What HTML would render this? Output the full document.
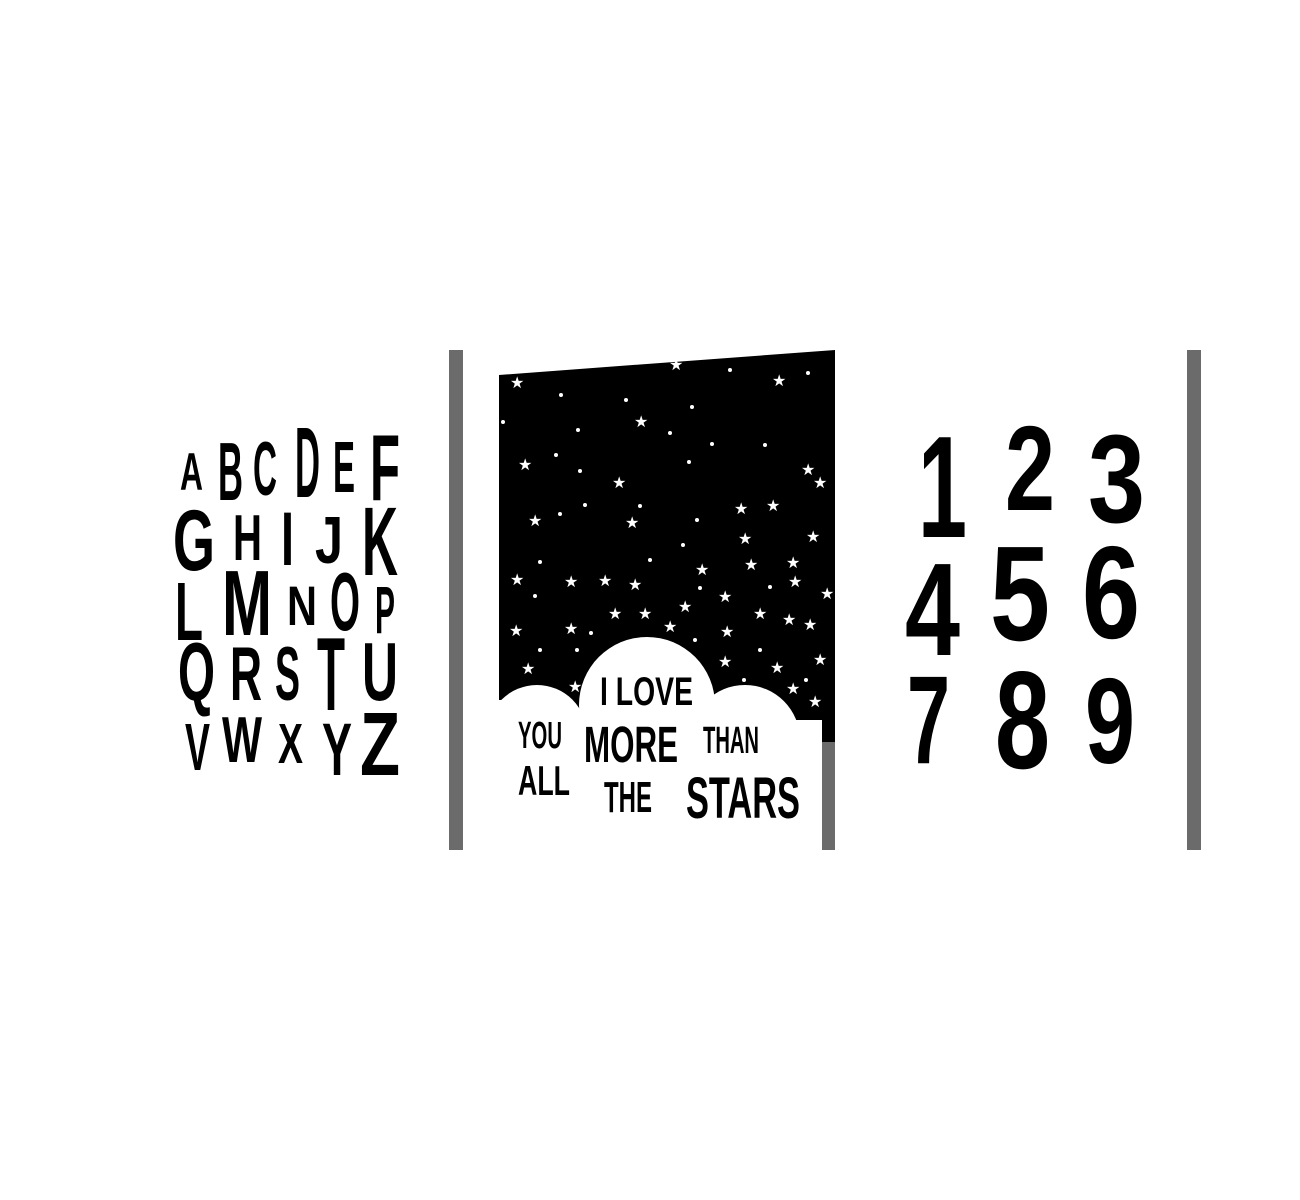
<!DOCTYPE html>
<html><head><meta charset="utf-8"><style>
html,body{margin:0;padding:0;background:#fff;width:1300px;height:1200px;overflow:hidden}
svg{display:block}
text{font-family:"Liberation Sans",sans-serif;font-weight:bold;fill:#000}
.s{fill:#fff;font-weight:normal;font-size:16px}
</style></head><body>
<svg width="1300" height="1200" viewBox="0 0 1300 1200">
<rect x="449" y="350" width="14" height="500" fill="#6b6b6b"/>
<rect x="1187" y="350" width="14" height="500" fill="#6b6b6b"/>
<polygon points="499,375 835,350 835,850 499,850" fill="#000"/>
<g>
<text class="s" x="510" y="388">★</text><text class="s" x="669" y="370">★</text><text class="s" x="772" y="386">★</text>
<text class="s" x="634" y="427">★</text><text class="s" x="518" y="470">★</text><text class="s" x="612" y="488">★</text>
<text class="s" x="528" y="526">★</text><text class="s" x="625" y="528">★</text><text class="s" x="734" y="514">★</text>
<text class="s" x="766" y="511">★</text><text class="s" x="801" y="475">★</text><text class="s" x="738" y="544">★</text>
<text class="s" x="806" y="542">★</text><text class="s" x="510" y="585">★</text><text class="s" x="564" y="587">★</text>
<text class="s" x="598" y="586">★</text><text class="s" x="628" y="590">★</text><text class="s" x="695" y="575">★</text>
<text class="s" x="718" y="602">★</text><text class="s" x="744" y="570">★</text><text class="s" x="786" y="568">★</text>
<text class="s" x="788" y="587">★</text><text class="s" x="509" y="636">★</text><text class="s" x="564" y="634">★</text>
<text class="s" x="608" y="619">★</text><text class="s" x="638" y="619">★</text><text class="s" x="663" y="632">★</text>
<text class="s" x="678" y="612">★</text><text class="s" x="720" y="637">★</text><text class="s" x="753" y="619">★</text>
<text class="s" x="782" y="625">★</text><text class="s" x="803" y="630">★</text><text class="s" x="521" y="674">★</text>
<text class="s" x="568" y="692">★</text><text class="s" x="718" y="667">★</text><text class="s" x="770" y="673">★</text>
<text class="s" x="786" y="694">★</text><text class="s" x="808" y="707">★</text><text class="s" x="798" y="732">★</text>
<text class="s" x="813" y="665">★</text><text class="s" x="820" y="599">★</text><text class="s" x="813" y="488">★</text>
</g>
<g fill="#fff">
<circle cx="561" cy="395" r="2"/><circle cx="626" cy="400" r="2"/><circle cx="692" cy="407" r="2"/><circle cx="730" cy="370" r="2"/><circle cx="808" cy="373" r="2"/><circle cx="503" cy="422" r="2"/><circle cx="578" cy="430" r="2"/><circle cx="670" cy="433" r="2"/><circle cx="712" cy="444" r="2"/><circle cx="765" cy="445" r="2"/><circle cx="556" cy="455" r="2"/><circle cx="580" cy="471" r="2"/><circle cx="689" cy="462" r="2"/><circle cx="640" cy="506" r="2"/><circle cx="697" cy="520" r="2"/><circle cx="560" cy="514" r="2"/><circle cx="585" cy="505" r="2"/><circle cx="540" cy="562" r="2"/><circle cx="650" cy="560" r="2"/><circle cx="683" cy="545" r="2"/><circle cx="770" cy="587" r="2"/><circle cx="700" cy="588" r="2"/><circle cx="535" cy="596" r="2"/><circle cx="591" cy="633" r="2"/><circle cx="695" cy="640" r="2"/><circle cx="760" cy="650" r="2"/><circle cx="540" cy="650" r="2"/><circle cx="577" cy="650" r="2"/><circle cx="773" cy="717" r="2"/><circle cx="815" cy="760" r="2"/><circle cx="806" cy="680" r="2"/><circle cx="744" cy="680" r="2"/>
</g>
<g fill="#fff">
<circle cx="647" cy="705" r="68"/>
<circle cx="537" cy="735" r="50"/>
<circle cx="745" cy="740" r="55"/>
<circle cx="800" cy="775" r="35"/>
<rect x="499" y="720" width="323" height="130"/>
<rect x="499" y="700" width="20" height="40"/>
</g>
<rect x="822" y="742" width="13" height="108" fill="#6b6b6b"/>
<text x="600" y="705" font-size="40" textLength="93" lengthAdjust="spacingAndGlyphs">I LOVE</text>
<text x="518" y="748" font-size="38" textLength="44" lengthAdjust="spacingAndGlyphs">YOU</text>
<text x="584" y="762" font-size="51" textLength="94" lengthAdjust="spacingAndGlyphs">MORE</text>
<text x="703" y="753" font-size="38" textLength="56" lengthAdjust="spacingAndGlyphs">THAN</text>
<text x="518" y="795" font-size="42" textLength="52" lengthAdjust="spacingAndGlyphs">ALL</text>
<text x="604" y="812" font-size="44" textLength="48" lengthAdjust="spacingAndGlyphs">THE</text>
<text x="686" y="818" font-size="58" textLength="114" lengthAdjust="spacingAndGlyphs">STARS</text>
<g>
<text x="180" y="490" font-size="53" textLength="23" lengthAdjust="spacingAndGlyphs">A</text>
<text x="218" y="500" font-size="83" textLength="25" lengthAdjust="spacingAndGlyphs">B</text>
<text x="253" y="495" font-size="76" textLength="24" lengthAdjust="spacingAndGlyphs">C</text>
<text x="295" y="497" font-size="100" textLength="25" lengthAdjust="spacingAndGlyphs">D</text>
<text x="333" y="492" font-size="72" textLength="22" lengthAdjust="spacingAndGlyphs">E</text>
<text x="370" y="500" font-size="94" textLength="30" lengthAdjust="spacingAndGlyphs">F</text>
<text x="173" y="570" font-size="86" textLength="42" lengthAdjust="spacingAndGlyphs">G</text>
<text x="233" y="560" font-size="65" textLength="29" lengthAdjust="spacingAndGlyphs">H</text>
<text x="281" y="565" font-size="76" textLength="13" lengthAdjust="spacingAndGlyphs">I</text>
<text x="315" y="563" font-size="67" textLength="28" lengthAdjust="spacingAndGlyphs">J</text>
<text x="362" y="575" font-size="97" textLength="36" lengthAdjust="spacingAndGlyphs">K</text>
<text x="175" y="640" font-size="83" textLength="28" lengthAdjust="spacingAndGlyphs">L</text>
<text x="222" y="635" font-size="93" textLength="50" lengthAdjust="spacingAndGlyphs">M</text>
<text x="287" y="625" font-size="56" textLength="30" lengthAdjust="spacingAndGlyphs">N</text>
<text x="330" y="630" font-size="83" textLength="30" lengthAdjust="spacingAndGlyphs">O</text>
<text x="375" y="633" font-size="67" textLength="20" lengthAdjust="spacingAndGlyphs">P</text>
<text x="178" y="700" font-size="83" textLength="37" lengthAdjust="spacingAndGlyphs">Q</text>
<text x="230" y="700" font-size="76" textLength="32" lengthAdjust="spacingAndGlyphs">R</text>
<text x="275" y="700" font-size="76" textLength="25" lengthAdjust="spacingAndGlyphs">S</text>
<text x="317" y="710" font-size="104" textLength="28" lengthAdjust="spacingAndGlyphs">T</text>
<text x="362" y="700" font-size="83" textLength="36" lengthAdjust="spacingAndGlyphs">U</text>
<text x="185" y="770" font-size="67" textLength="25" lengthAdjust="spacingAndGlyphs">V</text>
<text x="222" y="762" font-size="65" textLength="40" lengthAdjust="spacingAndGlyphs">W</text>
<text x="278" y="763" font-size="57" textLength="25" lengthAdjust="spacingAndGlyphs">X</text>
<text x="322" y="775" font-size="74" textLength="30" lengthAdjust="spacingAndGlyphs">Y</text>
<text x="360" y="775" font-size="90" textLength="40" lengthAdjust="spacingAndGlyphs">Z</text>
</g>
<text x="918" y="537" font-size="145" textLength="49" lengthAdjust="spacingAndGlyphs">1</text>
<text x="1005" y="510" font-size="121" textLength="50" lengthAdjust="spacingAndGlyphs">2</text>
<text x="1088" y="522" font-size="125" textLength="57" lengthAdjust="spacingAndGlyphs">3</text>
<text x="905" y="655" font-size="132" textLength="55" lengthAdjust="spacingAndGlyphs">4</text>
<text x="990" y="640" font-size="135" textLength="60" lengthAdjust="spacingAndGlyphs">5</text>
<text x="1082" y="638" font-size="132" textLength="58" lengthAdjust="spacingAndGlyphs">6</text>
<text x="907" y="763" font-size="125" textLength="43" lengthAdjust="spacingAndGlyphs">7</text>
<text x="995" y="768" font-size="139" textLength="55" lengthAdjust="spacingAndGlyphs">8</text>
<text x="1085" y="763" font-size="122" textLength="50" lengthAdjust="spacingAndGlyphs">9</text>
</svg>
</body></html>
